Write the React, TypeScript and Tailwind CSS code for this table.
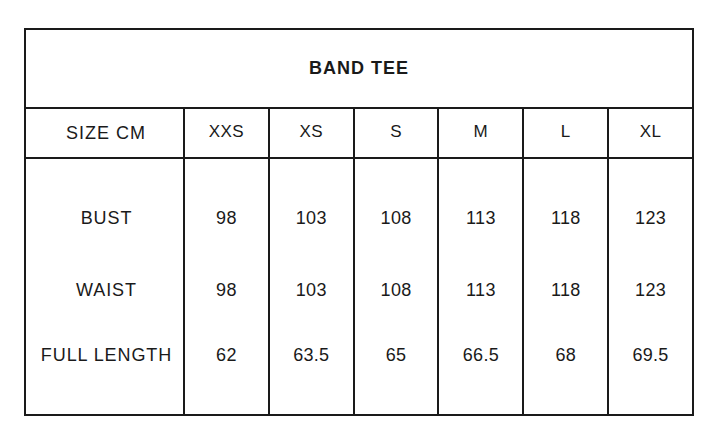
const sizes = ["XXS", "XS", "S", "M", "L", "XL"];

const rows = [
  { label: "BUST", values: ["98", "103", "108", "113", "118", "123"] },
  { label: "WAIST", values: ["98", "103", "108", "113", "118", "123"] },
  { label: "FULL LENGTH", values: ["62", "63.5", "65", "66.5", "68", "69.5"] },
];

const rowHeights = ["h-[72px]", "h-[65px]", "h-[60px]"];

export default function App() {
  return (
    <div className="w-[720px] h-[432px] bg-white pt-[28px] pl-[24px] font-['Liberation_Sans',Arial,sans-serif] text-[#1a1a1a]">
      <div className="w-[670px] h-[388px] border-2 border-[#1a1a1a] flex flex-col">
        <div className="h-[79px] flex items-center justify-center border-b-2 border-[#1a1a1a]">
          <span className="text-[18px] font-bold tracking-[1px]">BAND TEE</span>
        </div>
        <div className="flex h-[50px] border-b-2 border-[#1a1a1a]">
          <div className="w-[157px] flex items-center justify-center pl-[3px] text-[18px] tracking-[1px]">
            SIZE CM
          </div>
          {sizes.map((s) => (
            <div
              key={s}
              className="flex-1 border-l-2 border-[#1a1a1a] flex items-center justify-center text-[17px] tracking-[0.5px] pb-[3px]"
            >
              {s}
            </div>
          ))}
        </div>
        <div className="flex flex-1">
          <div className="w-[157px] flex flex-col pt-[46px] pl-[4px]">
            {rows.map((r, i) => (
              <div key={r.label} className={`${rowHeights[i]} text-center text-[18px] tracking-[0.9px]`}>
                {r.label}
              </div>
            ))}
          </div>
          {sizes.map((s, c) => (
            <div key={s} className="flex-1 border-l-2 border-[#1a1a1a] flex flex-col pt-[46px]">
              {rows.map((r, i) => (
                <div key={r.label} className={`${rowHeights[i]} text-center text-[18px] tracking-[0.3px]`}>
                  {r.values[c]}
                </div>
              ))}
            </div>
          ))}
        </div>
      </div>
    </div>
  );
}
